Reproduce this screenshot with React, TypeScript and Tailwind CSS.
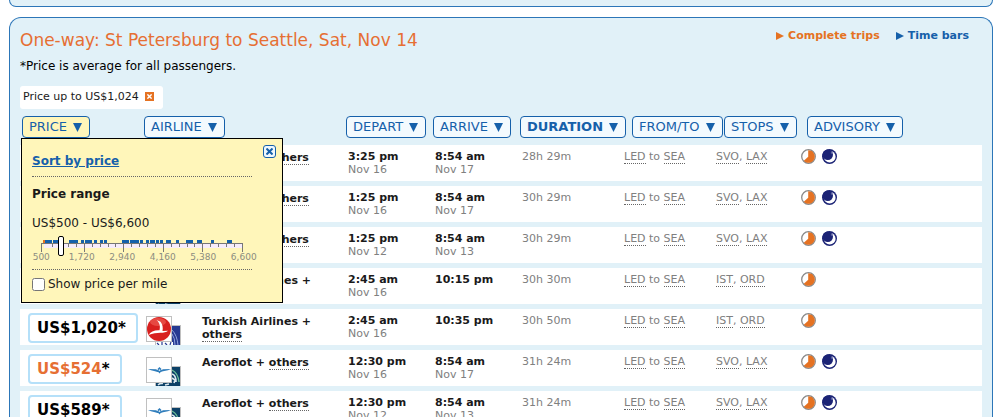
import { useState } from "react";

type Flight = {
  price: string;
  best?: boolean;
  carrier: "aeroflot" | "turkish";
  partner: "alaska" | "united";
  airline: string;
  depart: [string, string];
  arrive: [string, string?];
  duration: string;
  stops: [string, string];
  overnight: boolean;
};

const flights: Flight[] = [
  { price: "US$612", carrier: "aeroflot", partner: "alaska", airline: "Aeroflot", depart: ["3:25 pm", "Nov 16"], arrive: ["8:54 am", "Nov 17"], duration: "28h 29m", stops: ["SVO", "LAX"], overnight: true },
  { price: "US$612", carrier: "aeroflot", partner: "alaska", airline: "Aeroflot", depart: ["1:25 pm", "Nov 16"], arrive: ["8:54 am", "Nov 17"], duration: "30h 29m", stops: ["SVO", "LAX"], overnight: true },
  { price: "US$589", carrier: "aeroflot", partner: "alaska", airline: "Aeroflot", depart: ["1:25 pm", "Nov 12"], arrive: ["8:54 am", "Nov 13"], duration: "30h 29m", stops: ["SVO", "LAX"], overnight: true },
  { price: "US$982", carrier: "turkish", partner: "alaska", airline: "Turkish Airlines", depart: ["2:45 am", "Nov 16"], arrive: ["10:15 pm"], duration: "30h 30m", stops: ["IST", "ORD"], overnight: false },
  { price: "US$1,020", carrier: "turkish", partner: "united", airline: "Turkish Airlines", depart: ["2:45 am", "Nov 16"], arrive: ["10:35 pm"], duration: "30h 50m", stops: ["IST", "ORD"], overnight: false },
  { price: "US$524", best: true, carrier: "aeroflot", partner: "alaska", airline: "Aeroflot", depart: ["12:30 pm", "Nov 16"], arrive: ["8:54 am", "Nov 17"], duration: "31h 24m", stops: ["SVO", "LAX"], overnight: true },
  { price: "US$589", carrier: "aeroflot", partner: "alaska", airline: "Aeroflot", depart: ["12:30 pm", "Nov 12"], arrive: ["8:54 am", "Nov 13"], duration: "31h 24m", stops: ["SVO", "LAX"], overnight: true },
];

// [x, width] of each block of fares above the price axis
const fares = [
  [4, 7], [12, 3], [15, 3], [28, 9], [40, 3], [44, 7], [53, 3], [59, 3], [63, 3], [81, 7], [89, 9], [99, 3],
  [105, 3], [109, 5], [115, 3], [119, 3], [125, 5], [135, 3], [145, 7], [156, 5], [170, 3], [186, 5],
];
const majorTicks = [0, 43, 82, 122, 161, 201];
const minorTicks = [11, 19, 27, 35, 51, 59, 67, 74, 90, 98, 106, 114, 130, 138, 146, 153, 169, 177, 185, 193];

export default function App() {
  const [open, setOpen] = useState(true);

  return (
    <div className="ml-[9px] mr-[15px] font-['DejaVu_Sans','Verdana',sans-serif] text-[11px] leading-[13px] text-[#1a1a1a]">
      <div className="h-[7px] rounded-b-xl border border-t-0 border-[#2c76b8] bg-[#e1f1f8]" />

      <main className="mt-[10px] rounded-t-xl border border-b-0 border-[#2c76b8] bg-[#e1f1f8] px-[10px] pt-2">
        <header className="flex items-start justify-between">
          <h1 className="text-[17px] leading-7 text-[#e66f33]">One-way: St Petersburg to Seattle, Sat, Nov 14</h1>
          <nav className="mr-[13px] mt-[3px] flex gap-4 font-bold">
            <a href="#trips" className="flex items-center gap-1 text-[#e57222]">
              <RightArrow />
              Complete trips
            </a>
            <a href="#bars" className="flex items-center gap-1 text-[#1560aa]">
              <RightArrow />
              Time bars
            </a>
          </nav>
        </header>
        <p className="mt-[2px] text-[12px] leading-5 text-black">*Price is average for all passengers.</p>

        <div className="mt-[10px] flex">
          <div className="flex h-[23px] items-center gap-[6px] rounded-[3px] bg-white pl-[3px] pr-[9px] pb-[2px]">
            Price up to US$1,024
            <button type="button" aria-label="Remove filter" className="flex h-[9px] w-[9px] items-center justify-center bg-[#e57222] text-white">
              <Cross size={5} />
            </button>
          </div>
        </div>

        <table className="mt-[2px] w-full table-fixed border-separate border-spacing-x-0 border-spacing-y-[5px]">
          <colgroup>
            <col className="w-[124px]" />
            <col className="w-[56px]" />
            <col className="w-[144px]" />
            <col className="w-[87px]" />
            <col className="w-[87px]" />
            <col className="w-[102px]" />
            <col className="w-[92px]" />
            <col className="w-[85px]" />
            <col />
          </colgroup>
          <thead>
            <tr className="h-6 text-left align-top">
              <th className="relative p-0 pl-[2px] font-normal">
                <SortButton label="PRICE" active={open} onClick={() => setOpen(!open)} />
                {open && <PricePopup onClose={() => setOpen(false)} />}
              </th>
              <th colSpan={2} className="p-0 font-normal"><SortButton label="AIRLINE" /></th>
              <th className="p-0 pl-[2px] font-normal"><SortButton label="DEPART" /></th>
              <th className="p-0 pl-[2px] font-normal"><SortButton label="ARRIVE" /></th>
              <th className="p-0 pl-[2px] font-normal"><SortButton label="DURATION" bold /></th>
              <th className="p-0 pl-3 font-normal"><SortButton label="FROM/TO" /></th>
              <th className="p-0 pl-3 font-normal"><SortButton label="STOPS" /></th>
              <th className="p-0 pl-[10px] font-normal"><SortButton label="ADVISORY" /></th>
            </tr>
          </thead>
          <tbody>
            {flights.map((flight, i) => (
              <FlightRow key={i} flight={flight} />
            ))}
          </tbody>
        </table>
      </main>
    </div>
  );
}

function FlightRow({ flight }: { flight: Flight }) {
  return (
    <tr className="h-9 bg-white align-top text-[#808080]">
      <td className="p-0 pl-2 pt-1">
        <button type="button" className="flex h-[30px] items-center whitespace-nowrap rounded-[4px] border-2 border-[#b5e0f9] bg-white pl-[7px] pr-[10px] text-[15px] font-bold text-black">
          <span className={flight.best ? "text-[#e66f33]" : ""}>{flight.price}</span>
          <span>*</span>
        </button>
      </td>
      <td className="p-0 pl-[2px] pt-[7px]">
        <AirlineLogos carrier={flight.carrier} partner={flight.partner} />
      </td>
      <td className="p-0 pl-[2px] pr-4 pt-[6px] font-bold text-[#1a1a1a]">
        {flight.airline} + <Dotted>others</Dotted>
      </td>
      <td className="p-0 pl-1 pt-[5px]">
        <div className="font-bold text-[#1a1a1a]">{flight.depart[0]}</div>
        <div>{flight.depart[1]}</div>
      </td>
      <td className="p-0 pl-1 pt-[5px]">
        <div className="font-bold text-[#1a1a1a]">{flight.arrive[0]}</div>
        <div>{flight.arrive[1]}</div>
      </td>
      <td className="p-0 pl-1 pt-[5px]">{flight.duration}</td>
      <td className="p-0 pl-1 pt-[5px]">
        <Dotted>LED</Dotted> to <Dotted>SEA</Dotted>
      </td>
      <td className="p-0 pl-1 pt-[5px]">
        <Dotted>{flight.stops[0]}</Dotted>, <Dotted>{flight.stops[1]}</Dotted>
      </td>
      <td className="p-0 pl-1 pt-1">
        <div className="flex gap-[6px]">
          <LayoverIcon />
          {flight.overnight && <OvernightIcon />}
        </div>
      </td>
    </tr>
  );
}

function PricePopup({ onClose }: { onClose: () => void }) {
  const [max, setMax] = useState(1024);

  return (
    <div className="absolute left-[1px] top-[22px] z-10 h-[165px] w-[262px] border border-black bg-[#fff6ba] px-[10px] text-[12px] leading-4">
      <button
        type="button"
        aria-label="Close"
        onClick={onClose}
        className="absolute right-[6px] top-[6px] flex h-[13px] w-[13px] items-center justify-center rounded-[3px] border border-[#1560aa] bg-[#eef7fc] text-[#1560aa]"
      >
        <Cross size={7} />
      </button>
      <div className="w-[220px] border-b border-dotted border-[#666] pb-[7px] pt-[14px]">
        <a href="#sort" className="font-bold text-[#1560aa] underline">Sort by price</a>
      </div>
      <div className="mt-[9px] font-bold">Price range</div>
      <div className="mt-[13px]">US$500 - US$6,600</div>
      <div className="w-[220px] border-b border-dotted border-[#666] pb-[7px]">
        <div className="relative ml-[9px] mt-[5px] h-5">
          <PriceAxis />
          <input
            type="range"
            min={500}
            max={6600}
            value={max}
            onChange={(e) => setMax(Number(e.target.value))}
            aria-label="Price range"
            className="absolute left-0 top-0 h-5 w-[202px] appearance-none bg-transparent [&::-webkit-slider-thumb]:h-5 [&::-webkit-slider-thumb]:w-[6px] [&::-webkit-slider-thumb]:appearance-none [&::-webkit-slider-thumb]:rounded-[2px] [&::-webkit-slider-thumb]:border [&::-webkit-slider-thumb]:border-black [&::-webkit-slider-thumb]:bg-white"
          />
        </div>
        <div className="-ml-[11px] -mt-[3px] flex w-[243px] text-center text-[9px] leading-[9px] text-[#8c8c80]">
          {["500", "1,720", "2,940", "4,160", "5,380", "6,600"].map((label) => (
            <span key={label} className="flex-1">{label}</span>
          ))}
        </div>
      </div>
      <label className="mt-[6px] flex items-center gap-[3px]">
        <input type="checkbox" className="h-[13px] w-[13px]" />
        Show price per mile
      </label>
    </div>
  );
}

function PriceAxis() {
  return (
    <svg width="202" height="20" viewBox="0 0 202 20" shapeRendering="crispEdges" className="block">
      <rect x="3" y="8" width="198" height="4" fill="#f6ecfb" />
      {fares.map(([x, width]) => (
        <rect key={x} x={x} y="4" width={width} height="3" fill="#1560aa" />
      ))}
      <rect x="2" y="4" width="2" height="3" fill="#e57222" />
      <rect x="0" y="7" width="202" height="1" fill="#777" />
      {minorTicks.map((x) => (
        <rect key={x} x={x} y="8" width="1" height="3" fill="#777" />
      ))}
      {majorTicks.map((x) => (
        <rect key={x} x={x} y="7" width="1" height="9" fill="#777" />
      ))}
    </svg>
  );
}

function SortButton({ label, active, bold, onClick }: { label: string; active?: boolean; bold?: boolean; onClick?: () => void }) {
  return (
    <button
      type="button"
      onClick={onClick}
      className={`flex h-[22px] items-center gap-[6px] whitespace-nowrap rounded-[4px] border border-[#1560aa] pl-[6px] pr-[7px] text-[13px] leading-5 text-[#1560aa] ${active ? "bg-[#fff6ba]" : "bg-[#f3fafe]"} ${bold ? "font-bold" : ""}`}
    >
      {label}
      <svg width="9" height="9" viewBox="0 0 9 9" fill="currentColor">
        <path d="M0 0h9L4.5 9z" />
      </svg>
    </button>
  );
}

function Dotted({ children }: { children: string }) {
  return <span className="border-b border-dotted border-[#666]">{children}</span>;
}

function RightArrow() {
  return (
    <svg width="8" height="8" viewBox="0 0 8 8" fill="currentColor">
      <path d="M0 0l8 4-8 4z" />
    </svg>
  );
}

function Cross({ size }: { size: number }) {
  return (
    <svg width={size} height={size} viewBox="0 0 7 7" stroke="currentColor" strokeWidth="2">
      <path d="M.5 .5l6 6M6.5 .5l-6 6" />
    </svg>
  );
}

function LayoverIcon() {
  return (
    <svg width="15" height="15" viewBox="0 0 15 15">
      <circle cx="7.5" cy="7.5" r="6.8" fill="#fff" stroke="#8a8a8a" strokeWidth="1.3" />
      <path d="M7.2 7.8V1.200A6.300 6.300 0 1 1 2.800 11.700z" fill="#e57222" />
    </svg>
  );
}

function OvernightIcon() {
  return (
    <svg width="15" height="15" viewBox="0 0 15 15">
      <circle cx="7.5" cy="7.5" r="7.5" fill="#1b2375" />
      <circle cx="7.7" cy="7.7" r="5.9" fill="#fff" />
      <circle cx="5.8" cy="5.8" r="5.2" fill="#1b2375" />
      <path d="M10 2.200l.4 1.300 1.300.4-1.300.4-.4 1.300-.4-1.300-1.300-.4 1.300-.4z" fill="#8b90c0" />
    </svg>
  );
}

function AirlineLogos({ carrier, partner }: { carrier: Flight["carrier"]; partner: Flight["partner"] }) {
  return (
    <svg width="35" height="29" viewBox="0 0 35 29" className="block">
      <path d="M9 9h26v20H9z" fill="#c0c0c0" />
      {partner === "alaska" ? (
        <>
          <path d="M10 10h24v19H10z" fill="#0c4066" />
          <path d="M26 13q6 3 7 12" fill="none" stroke="#6cc09a" strokeWidth="1.3" />
          <path d="M26 17q4 1 4 8M26 21l3 2-1 3M12 28q2-2 5-1.500M19 28l4-1" fill="none" stroke="#dbe7ee" strokeWidth="1.600" />
        </>
      ) : (
        <>
          <path d="M10 10h24v19H10z" fill="#263a92" />
          <path d="M26 14q5 5 6 15M26 18q3 4 3 11" fill="none" stroke="#8fa3dc" strokeWidth="1" />
          <path d="M10 26h17v3H10z" fill="#fff" />
          <path d="M11 27l2 2M16 26v3M19 27l2 2M25 26l-1 3" stroke="#263a92" strokeWidth="1.200" />
        </>
      )}
      <rect x=".5" y=".5" width="25" height="25" fill="#fff" stroke="#c0c0c0" />
      {carrier === "turkish" ? (
        <>
          <circle cx="13" cy="13" r="12" fill="#d8201f" />
          <ellipse cx="12" cy="6" rx="8" ry="4" fill="#f0645a" opacity=".6" />
          <path d="M10.500 4l4 1.700c2.300 3 2.600 6 2 9.300l5.500-.3c-3 3.300-11 .8-19.500 4.300 2-3.300 6-5 11-4.700 1-4 .3-7.500-3-10.300z" fill="#fff" />
        </>
      ) : (
        <g fill="#2f7dbb">
          <path d="M2 12l8 .3 2 .9h3l2-.9 8-.3-3 1.300-5 .9-2.500.8h-3L9 14.200 5 13.300z" />
          <path d="M12 11.500l1.500-1.500 1.500 1.500.5 2.500-2 2.500-2-2.500z" />
          <circle cx="13.500" cy="13.200" r=".9" fill="#cfe3f1" />
        </g>
      )}
    </svg>
  );
}
